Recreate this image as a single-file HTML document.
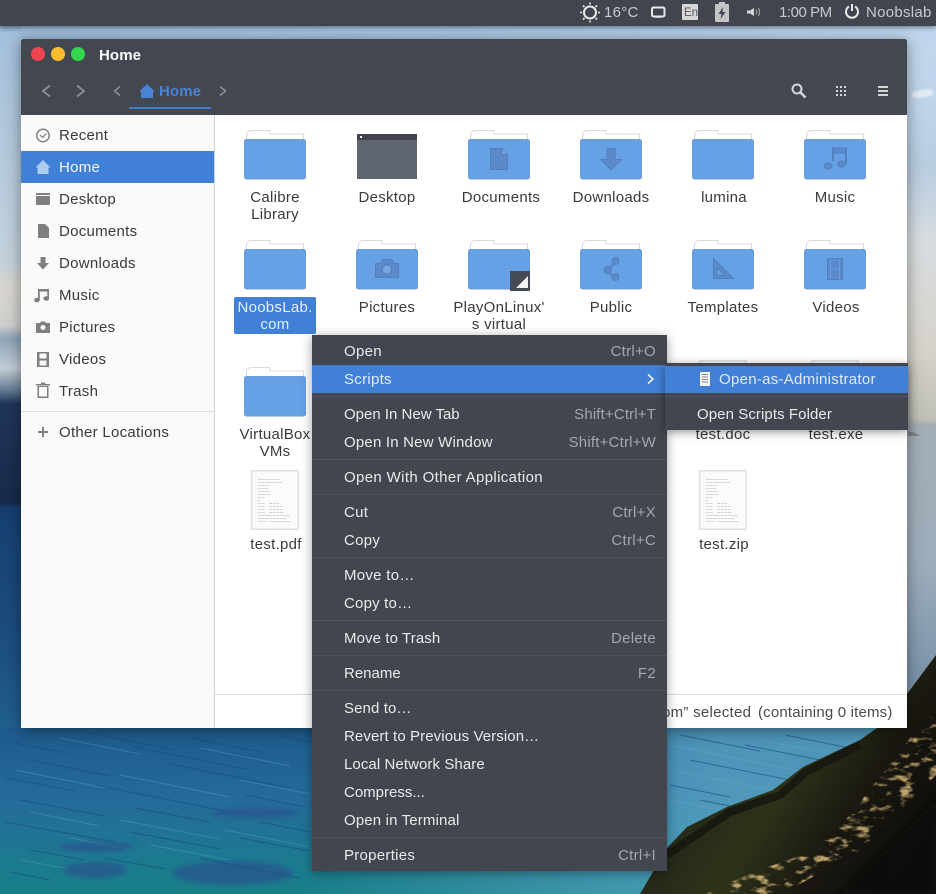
<!DOCTYPE html>
<html lang="en"><head><meta charset="utf-8"><title>Home</title>
<style>
html,body{margin:0;padding:0;width:936px;height:894px;overflow:hidden;background:#1d5a88}
body{position:relative;font-family:"Liberation Sans",sans-serif;font-size:15px;letter-spacing:.28px;color:#3a3a3a}
.a{position:absolute}
.t{position:absolute;white-space:nowrap;line-height:20px;height:20px;margin-top:2px}
.c{position:absolute;width:140px;text-align:center;white-space:nowrap;line-height:17px;height:17px;margin-top:1px}
svg{position:absolute;overflow:hidden}
#top{left:0;top:0;width:936px;height:26px;background:#41454e;box-shadow:0 1px 5px rgba(30,40,60,.65)}
#win{left:21px;top:39px;width:886px;height:689px;background:#fff;box-shadow:0 2px 14px rgba(0,0,0,.42)}
#hdr{left:21px;top:39px;width:886px;height:76px;background:#43474f;border-radius:2px 2px 0 0}
#side{left:21px;top:115px;width:193px;height:613px;background:#fafafa;border-right:1px solid #d3d3d3}
#status{left:215px;top:694px;width:692px;height:33px;border-top:1px solid #dedede;background:#fff}
#menu{left:312px;top:335px;width:355px;height:536px;background:#43464e;box-shadow:0 2px 10px rgba(0,0,0,.38)}
#sub{left:665px;top:363px;width:243px;height:67px;background:#43464e;box-shadow:0 2px 9px rgba(0,0,0,.42)}
.hl{position:absolute;background:#4180d7}
.m{position:absolute;left:344px;white-space:nowrap;line-height:20px;height:20px;color:#eaeaea;margin-top:2px}
.k{position:absolute;right:280px;white-space:nowrap;line-height:20px;height:20px;color:#a4a7ac;margin-top:2px}
.sep{position:absolute;left:312px;width:355px;height:1px;background:#50545c}
</style></head><body>

<svg class="a" style="left:0;top:0" width="936" height="894" viewBox="0 0 936 894">
<defs>
<linearGradient id="lft" x1="0" y1="26" x2="0" y2="894" gradientUnits="userSpaceOnUse">
<stop offset="0" stop-color="#8fa9c4"/><stop offset=".008" stop-color="#a4c0db"/><stop offset=".27" stop-color="#c3d1dc"/><stop offset=".3" stop-color="#d8d5cf"/><stop offset=".345" stop-color="#cfcfcd"/><stop offset=".36" stop-color="#8ea4b8"/><stop offset=".395" stop-color="#c3ccd4"/><stop offset=".42" stop-color="#627a92"/><stop offset=".435" stop-color="#20355a"/><stop offset=".55" stop-color="#182a4b"/><stop offset=".555" stop-color="#163f70"/><stop offset=".72" stop-color="#1c4f82"/><stop offset=".81" stop-color="#20608f"/><stop offset="1" stop-color="#20608f"/>
</linearGradient>
<linearGradient id="rgt" x1="0" y1="26" x2="0" y2="740" gradientUnits="userSpaceOnUse">
<stop offset="0" stop-color="#c1d7ee"/><stop offset=".12" stop-color="#bed3ea"/><stop offset=".2" stop-color="#b9cde0"/><stop offset=".3" stop-color="#d7dcdf"/><stop offset=".45" stop-color="#d6d3cb"/><stop offset=".55" stop-color="#bfbfb8"/><stop offset=".56" stop-color="#a3adb5"/><stop offset=".75" stop-color="#9dadbb"/><stop offset=".9" stop-color="#7d95ab"/><stop offset="1" stop-color="#6c8ca7"/>
</linearGradient>
<linearGradient id="band" x1="0" y1="0" x2="936" y2="0" gradientUnits="userSpaceOnUse">
<stop offset="0" stop-color="#9dbcd9"/><stop offset=".5" stop-color="#a9c6e2"/><stop offset="1" stop-color="#c0d7ee"/>
</linearGradient>
<linearGradient id="sea" x1="0" y1="728" x2="0" y2="894" gradientUnits="userSpaceOnUse">
<stop offset="0" stop-color="#1e5a8c"/><stop offset=".45" stop-color="#246c9a"/><stop offset=".8" stop-color="#1c7a90"/><stop offset="1" stop-color="#187f87"/>
</linearGradient>
<linearGradient id="seal" x1="300" y1="0" x2="720" y2="0" gradientUnits="userSpaceOnUse">
<stop offset="0" stop-color="#62acc9" stop-opacity="0"/><stop offset="1" stop-color="#62acc9" stop-opacity=".7"/>
</linearGradient>
<linearGradient id="hill" x1="700" y1="750" x2="900" y2="880" gradientUnits="userSpaceOnUse">
<stop offset="0" stop-color="#22261a"/><stop offset=".38" stop-color="#2d3319"/><stop offset=".68" stop-color="#191710"/><stop offset="1" stop-color="#0d0c09"/>
</linearGradient>
<filter id="gold" x="0" y="0" width="100%" height="100%"><feTurbulence type="fractalNoise" baseFrequency=".07 .16" numOctaves="3" seed="9"/><feColorMatrix type="matrix" values="0 0 0 0 .52  0 0 0 0 .37  0 0 0 0 .15  4 0 0 0 -2.100"/><feComposite in2="SourceAlpha" operator="in"/></filter>
<filter id="bl"><feGaussianBlur stdDeviation="2.500"/></filter>
<filter id="bl1"><feGaussianBlur stdDeviation="1"/></filter>
<clipPath id="hc"><path d="M640 894L667 848L687 827L727 807L773 790L803 767L860 740L877 728L910 690L936 655V894Z"/></clipPath>
</defs>
<rect x="0" y="0" width="936" height="40" fill="url(#band)"/>
<rect x="0" y="26" width="21" height="868" fill="url(#lft)"/>
<rect x="907" y="26" width="29" height="720" fill="url(#rgt)"/>
<path d="M912 93Q925 88 932 90L934 94Q920 100 912 97Z" fill="#eef2f6" opacity=".8" filter="url(#bl1)"/>
<path d="M908 431L916 433L920 436H908Z" fill="#80868b"/>
<rect x="0" y="728" width="936" height="166" fill="url(#sea)"/>
<rect x="300" y="728" width="636" height="166" fill="url(#seal)"/>
<g fill="none" stroke="#174a7c" stroke-width="1" opacity=".6">
<path d="M5 741l60 12M90 733l85 17M190 738l70 14M135 747l110 22M280 735l38 9M30 760l80 16M170 764l120 24M5 778l70 13M95 785l130 26M245 795l60 12M20 800l85 16M135 808l75 14M260 822l50 10M5 822l110 20M130 832l90 17M240 838l70 13M30 850l55 10M105 858l60 11M200 858l100 20M10 872l40 8M680 735l80 16M690 760l100 20M670 785l60 12M745 745l120 24M785 735l100 20M700 800l30 6"/>
</g>
<g fill="none" stroke="#6fb7cf" stroke-width="1" opacity=".3">
<path d="M60 738l80 16M200 748l90 18M15 770l90 18M120 775l110 22M240 780l70 14M30 812l70 14M120 820l100 19M225 830l85 17M70 838l60 11M150 845l80 15M20 860l50 9M670 745l130 26M680 772l140 28M670 800l60 12M760 740l100 20"/>
</g>
<g fill="#2a4b8d" opacity=".6" filter="url(#bl)">
<ellipse cx="96" cy="847" rx="38" ry="5"/><ellipse cx="95" cy="870" rx="32" ry="8"/><ellipse cx="233" cy="873" rx="60" ry="12"/><ellipse cx="256" cy="813" rx="44" ry="5"/>
</g>
<path d="M640 894L667 848L687 827L727 807L773 790L803 767L860 740L877 728L910 690L936 655V894Z" fill="url(#hill)"/>
<g clip-path="url(#hc)">
<path d="M700 894L760 870L815 850L850 815L885 770L936 705V775L890 820L860 850L800 884L770 894Z" fill="#fff" filter="url(#gold)"/>
<path d="M840 894L936 800V894Z" fill="#0c0b08" opacity=".9" filter="url(#bl)"/>
<path d="M667 855L730 812L780 795L806 772L860 745" stroke="#17170f" stroke-width="8" fill="none" opacity=".9"/>
</g>
</svg>

<div class="a" id="top"></div>
<div class="a" id="win"></div>
<div class="a" id="hdr"></div>
<div class="a" id="side"></div>
<div class="hl" style="left:21px;top:151px;width:193px;height:32px"></div>
<div class="a" style="left:21px;top:411px;width:193px;height:1px;background:#dcdcdc"></div>
<div class="a" id="status"></div>

<svg class="a" style="left:0;top:0" width="936" height="894" viewBox="0 0 936 894">
<defs>
<symbol id="fd" viewBox="0 0 62 50" width="62" height="50">
<path d="M2.500 9V5Q3 1 7 .5H26V4H59.500V9" fill="#fff" stroke="#d9dbdf"/>
<rect x=".5" y="9.500" width="61" height="39.500" rx="2" fill="#66a0e5" stroke="#6a9bd8"/>
</symbol>
<symbol id="dc" viewBox="0 0 48 60" width="48" height="60">
<rect x=".75" y=".75" width="46.500" height="58.500" fill="#fbfbfb" stroke="#dcdfe4" stroke-width="1.500"/>
<g stroke="#c3c7ce" stroke-width=".8" stroke-dasharray="3 .6">
<path d="M7 9.500H29M7 12.500H31M7 15.500H19M7 18.500H17M7 21.500H19M7 24.500H19M7 27.500H14M7 30.500H9M7 33.500H14M18 33.500H28M7 36.500H14M18 36.500H32M7 39.500H14M18 39.500H31M7 42.500H14M18 42.500H33M7 45.500H39M7 48.500H36M7 51.500H16M19 51.500H40"/>
</g>
</symbol>
</defs>

<!-- top bar icons -->
<g stroke="#e8e8e8" fill="none">
<circle cx="590" cy="12.500" r="6" stroke-width="2"/>
<path d="M590 2.500V4.500M590 20.500V22.500M580 12.500H582M598 12.500H600M583 5.500L584.500 7M595.500 18L597 19.500M583 19.500L584.500 18M595.500 7L597 5.500" stroke-width="1.600"/>
<rect x="652" y="7.500" width="12.500" height="9" rx="1.500" stroke-width="2"/>
<path d="M655 17H661" stroke-width="1.500"/>
<path d="M849 6.500A6 6 0 1 0 855 6.500" stroke-width="2"/><path d="M852 4V11" stroke-width="2"/>
</g>
<rect x="682" y="4" width="16" height="16" rx="1" fill="#d6d6d6"/>
<rect x="715" y="4" width="14" height="18" rx="1" fill="#c4c4c4"/><rect x="719" y="2" width="6" height="2.500" fill="#c4c4c4"/>
<path d="M723 7L718.500 14H721.500L720.500 19L725.500 12H722.500Z" fill="#41454e"/>
<path d="M747 10.500H750L754 8V16L750 13.500H747Z" fill="#d6d6d6"/>
<path d="M756 9.500Q757.500 12 756 14.500M758.500 8Q760.500 12 758.500 16" stroke="#a9abae" stroke-width="1" fill="none"/>

<!-- traffic lights -->
<circle cx="38" cy="54" r="7" fill="#ef4550"/><circle cx="58" cy="54" r="7" fill="#fbbd2e"/><circle cx="78" cy="54" r="7" fill="#32d74b"/>
<!-- nav -->
<g fill="none" stroke="#8d9096" stroke-width="1.800">
<path d="M50 85.500L43 91L50 96.500"/><path d="M77 85.500L84 91L77 96.500"/>
<path d="M120 86.500L114.500 91L120 95.500" stroke-width="1.500"/><path d="M220 86.500L225.500 91L220 95.500" stroke-width="1.500"/>
</g>
<path d="M147 84L155 91.500H153V98H141V91.500H139Z" fill="#4a83d4"/>
<rect x="129" y="107" width="82" height="2" fill="#417cce"/>
<g fill="none" stroke="#d5d6d8"><circle cx="797" cy="89" r="4.500" stroke-width="2"/><path d="M800.500 92.500L805.500 97.500" stroke-width="2.500"/></g>
<g fill="#d5d6d8"><path d="M836 86h2v2h-2zM840 86h2v2h-2zM844 86h2v2h-2zM836 90h2v2h-2zM840 90h2v2h-2zM844 90h2v2h-2zM836 94h2v2h-2zM840 94h2v2h-2zM844 94h2v2h-2z"/>
<rect x="878" y="86" width="10" height="2"/><rect x="878" y="90" width="10" height="2"/><rect x="878" y="94" width="10" height="2"/></g>

<!-- sidebar icons -->
<g fill="#7f7f7f">
<circle cx="43" cy="135.500" r="6.200" fill="none" stroke="#7f7f7f" stroke-width="1.500"/><path d="M40 135L42.500 137.500L46.500 133.500" fill="none" stroke="#7f7f7f" stroke-width="1.200"/>
<path d="M43 160L50.500 167.500H48.500V174H37.500V167.500H35.500Z" fill="#aecbf0"/>
<rect x="36" y="193" width="14" height="12" rx="1"/><rect x="36" y="195" width="14" height="1" fill="#fafafa"/>
<path d="M38 224H45L49 228V238H38Z"/>
<path d="M40.500 257H45.500V263H49L43 269.500L37 263H40.500Z"/>
<path d="M38 289H49V298.500A2.800 2.300 0 1 1 47.300 296.400V291.500H39.800V300A2.800 2.300 0 1 1 38 297.900Z"/>
<path d="M36 323H40L41 321.500H45L46 323H50V333H36Z"/><circle cx="43" cy="327.500" r="2.500" fill="#fafafa"/>
<path d="M37 352H49V367H37ZM39.500 353.500V358.500H46.500V353.500ZM39.500 360.500V365.500H46.500V360.500Z" fill-rule="evenodd"/>
<rect x="36" y="384" width="14" height="1.500"/><rect x="41" y="382.500" width="4" height="2"/>
<path d="M37.500 386H48.500V398H37.500ZM39 387V396.500H47V387Z" fill-rule="evenodd"/>
<path d="M42 427H44V431H48V433H44V437H42V433H38V431H42Z"/>
</g>

<!-- folders -->
<use href="#fd" x="244" y="130"/>
<rect x="357" y="134" width="60" height="45" fill="#5f6670"/><rect x="357" y="134" width="60" height="6" fill="#41444e"/><rect x="360" y="136" width="2" height="2" fill="#eee"/>
<use href="#fd" x="468" y="130"/><use href="#fd" x="580" y="130"/><use href="#fd" x="692" y="130"/><use href="#fd" x="804" y="130"/>
<use href="#fd" x="244" y="240"/><use href="#fd" x="356" y="240"/><use href="#fd" x="468" y="240"/><use href="#fd" x="580" y="240"/><use href="#fd" x="692" y="240"/><use href="#fd" x="804" y="240"/>
<use href="#fd" x="244" y="367"/>
<use href="#dc" x="699" y="360"/><use href="#dc" x="811" y="360"/>
<use href="#dc" x="251" y="470"/><use href="#dc" x="699" y="470"/>

<!-- folder glyphs -->
<g fill="#5a8acb" stroke="#5280bc" stroke-width="1">
<path d="M490.500 148.500H502L507.500 154.500V169.500H490.500Z"/><path d="M502 148.500V154.500H507.500" fill="#74a3dd"/>
<path d="M607 148.500H615V159.500H621.500L611 169.500L600.500 159.500H607Z"/>
<path d="M833 161V148.500H846V164M833 152H846" fill="none" stroke-width="2"/><rect x="833" y="148" width="13" height="5"/><ellipse cx="828" cy="166" rx="4" ry="3"/><ellipse cx="841.500" cy="164" rx="4" ry="3"/>
<path d="M375.500 263.500H381L383 259.500H392L394 263.500H398.500V277.500H375.500Z"/><circle cx="387" cy="269.500" r="4.500" fill="#76a8e2"/>
<path d="M616 263L608 268.500M608 272.500L616 277" fill="none" stroke-width="2"/><circle cx="615.500" cy="261" r="3.500"/><circle cx="607.500" cy="270" r="3.500"/><circle cx="615.500" cy="277" r="3.500"/>
<path d="M713.500 258.500L733.500 278.500H713.500Z"/><path d="M717 268L725 275.500H717Z" fill="#66a0e5"/>
<rect x="827.500" y="258.500" width="15" height="21"/><path d="M830.500 259V279M839.500 259V279M830.500 269H839.500" stroke="#66a0e5" stroke-width="1" fill="none"/>
</g>
<rect x="510" y="271" width="20" height="20" fill="#454a57"/><path d="M528 276V288H516Z" fill="#f4f4f4"/>
</svg>

<!-- top bar text -->
<div class="t" style="left:604px;top:1px;color:#c9cacc">16°C</div>
<div class="t" style="left:684px;top:1px;font-size:11.500px;color:#55585e;letter-spacing:0">En</div>
<div class="t" style="left:779px;top:1px;color:#c9cacc;letter-spacing:-.45px">1:00 PM</div>
<div class="t" style="left:866px;top:1px;color:#c9cacc">Noobslab</div>

<div class="t" style="left:99px;top:44px;color:#fff;font-weight:bold;letter-spacing:.1px">Home</div>
<div class="t" style="left:159px;top:80px;color:#4a83d4;font-weight:bold;letter-spacing:.1px">Home</div>

<div class="t" style="left:59px;top:124px">Recent</div>
<div class="t" style="left:59px;top:156px;color:#f4f7fc">Home</div>
<div class="t" style="left:59px;top:188px">Desktop</div>
<div class="t" style="left:59px;top:220px">Documents</div>
<div class="t" style="left:59px;top:252px">Downloads</div>
<div class="t" style="left:59px;top:284px">Music</div>
<div class="t" style="left:59px;top:316px">Pictures</div>
<div class="t" style="left:59px;top:348px">Videos</div>
<div class="t" style="left:59px;top:380px">Trash</div>
<div class="t" style="left:59px;top:421px">Other Locations</div>

<div class="hl" style="left:234px;top:297px;width:82px;height:37px;border-radius:2px"></div>

<div class="c" style="left:205px;top:188px">Calibre</div><div class="c" style="left:205px;top:205px">Library</div>
<div class="c" style="left:317px;top:188px">Desktop</div>
<div class="c" style="left:431px;top:188px">Documents</div>
<div class="c" style="left:541px;top:188px">Downloads</div>
<div class="c" style="left:654px;top:188px">lumina</div>
<div class="c" style="left:765px;top:188px">Music</div>
<div class="c" style="left:205px;top:298px;color:#e6effb">NoobsLab.</div><div class="c" style="left:205px;top:315px;color:#e6effb">com</div>
<div class="c" style="left:317px;top:298px">Pictures</div>
<div class="c" style="left:429px;top:298px">PlayOnLinux'</div><div class="c" style="left:429px;top:315px">s virtual</div>
<div class="c" style="left:541px;top:298px">Public</div>
<div class="c" style="left:653px;top:298px">Templates</div>
<div class="c" style="left:766px;top:298px">Videos</div>
<div class="c" style="left:205px;top:425px">VirtualBox</div><div class="c" style="left:205px;top:442px">VMs</div>
<div class="c" style="left:653px;top:425px">test.doc</div>
<div class="c" style="left:766px;top:425px">test.exe</div>
<div class="c" style="left:206px;top:535px">test.pdf</div>
<div class="c" style="left:654px;top:535px">test.zip</div>

<div class="t" style="left:662px;top:701px;color:#4a4a4a">om” selected</div>
<div class="t" style="left:758px;top:701px;color:#4a4a4a;letter-spacing:.18px">(containing 0 items)</div>

<!-- context menu -->
<div class="a" id="menu"></div>
<div class="hl" style="left:312px;top:365px;width:355px;height:28px"></div>
<div class="sep" style="top:396px"></div><div class="sep" style="top:459px"></div><div class="sep" style="top:494px"></div><div class="sep" style="top:557px"></div><div class="sep" style="top:620px"></div><div class="sep" style="top:655px"></div><div class="sep" style="top:690px"></div><div class="sep" style="top:837px"></div>

<div class="m" style="top:340px">Open</div><div class="k" style="top:340px">Ctrl+O</div>
<div class="m" style="top:368px;color:#e3ecf9">Scripts</div>
<div class="m" style="top:403px;letter-spacing:0">Open In New Tab</div><div class="k" style="top:403px;letter-spacing:.15px">Shift+Ctrl+T</div>
<div class="m" style="top:431px;letter-spacing:.2px">Open In New Window</div><div class="k" style="top:431px;letter-spacing:.2px">Shift+Ctrl+W</div>
<div class="m" style="top:466px;letter-spacing:.36px">Open With Other Application</div>
<div class="m" style="top:501px">Cut</div><div class="k" style="top:501px">Ctrl+X</div>
<div class="m" style="top:529px">Copy</div><div class="k" style="top:529px">Ctrl+C</div>
<div class="m" style="top:564px">Move to…</div>
<div class="m" style="top:592px;letter-spacing:.2px">Copy to…</div>
<div class="m" style="top:627px;letter-spacing:.1px">Move to Trash</div><div class="k" style="top:627px">Delete</div>
<div class="m" style="top:662px;letter-spacing:0">Rename</div><div class="k" style="top:662px">F2</div>
<div class="m" style="top:697px;letter-spacing:.1px">Send to…</div>
<div class="m" style="top:725px;letter-spacing:.1px">Revert to Previous Version…</div>
<div class="m" style="top:753px;letter-spacing:.08px">Local Network Share</div>
<div class="m" style="top:781px;letter-spacing:0">Compress...</div>
<div class="m" style="top:809px;letter-spacing:.15px">Open in Terminal</div>
<div class="m" style="top:844px">Properties</div><div class="k" style="top:844px">Ctrl+I</div>

<!-- submenu -->
<div class="a" id="sub"></div>
<div class="hl" style="left:665px;top:366px;width:243px;height:27px"></div>
<div class="a" style="left:665px;top:396px;width:243px;height:1px;background:#50545c"></div>
<svg class="a" style="left:0;top:0" width="936" height="894" viewBox="0 0 936 894">
<path d="M648 374.500L653 379L648 383.500" fill="none" stroke="#eef3fb" stroke-width="1.600"/>
<rect x="700" y="372" width="10" height="14" fill="#f4f4f2"/>
<path d="M702 374.500H708M702 377H708M702 379.500H708M702 382H708" stroke="#7d8794" stroke-width="1"/>
</svg>
<div class="t" style="left:719px;top:368px;color:#dfe9f8">Open-as-Administrator</div>
<div class="t" style="left:697px;top:403px;color:#eaeaea;letter-spacing:.08px">Open Scripts Folder</div>
</body></html>
